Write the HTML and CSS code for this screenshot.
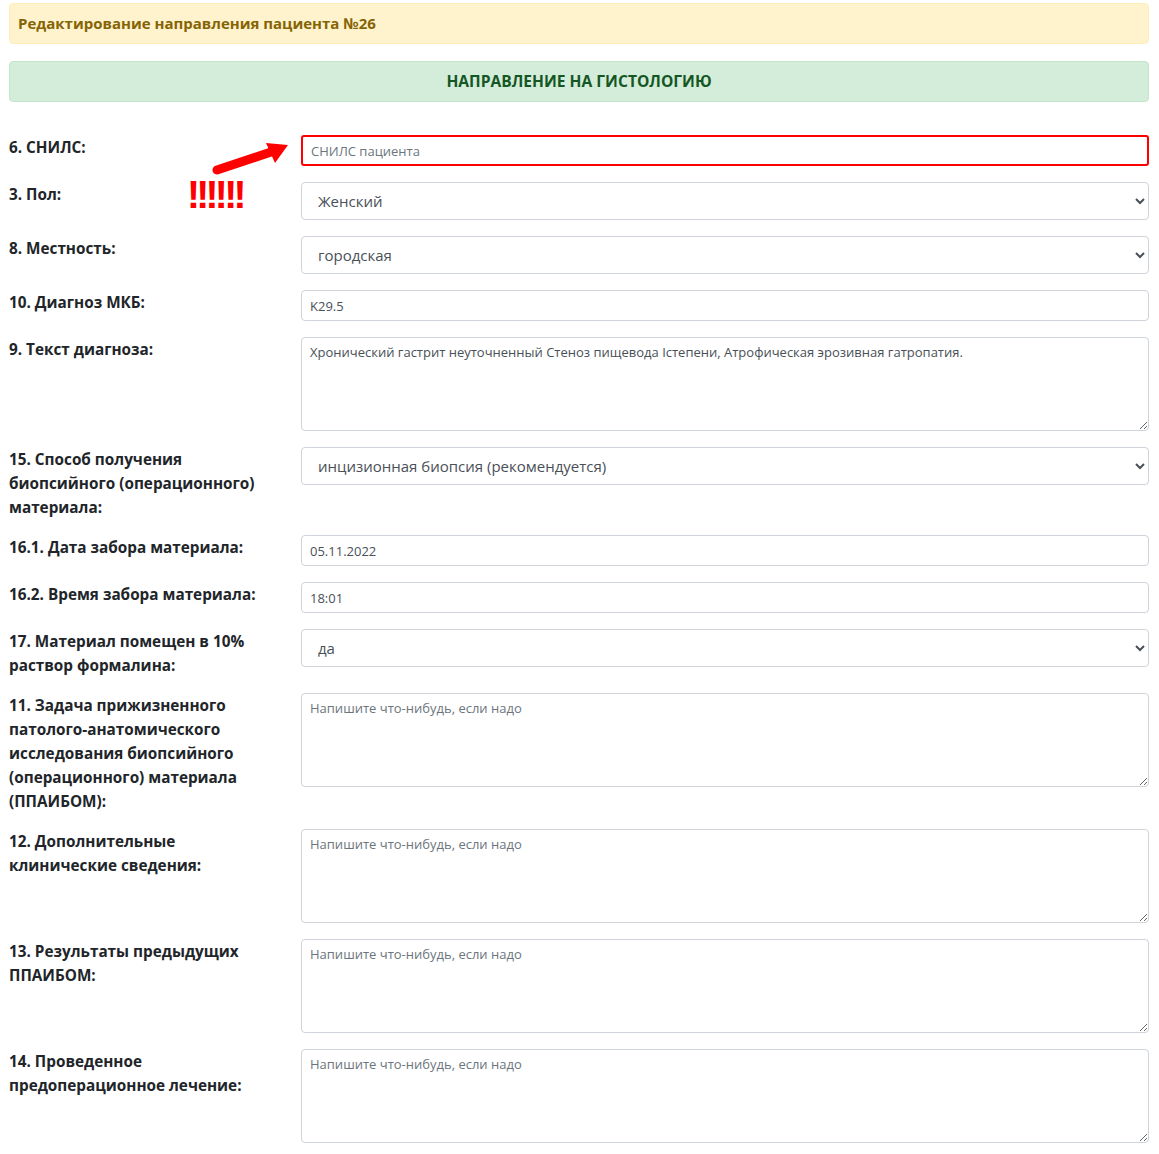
FILE: index.html
```html
<!DOCTYPE html>
<html lang="ru">
<head>
<meta charset="utf-8">
<title>Редактирование направления пациента №26</title>
<link rel="stylesheet" href="styles.css">
</head>
<body>
<div class="page">
  <div class="alert alert-warning">Редактирование направления пациента №26</div>
  <div class="alert alert-success">НАПРАВЛЕНИЕ НА ГИСТОЛОГИЮ</div>

  <form class="form">
    <div class="row">
      <label class="lbl">6. СНИЛС:</label>
      <input class="ctl ctl-sm ctl-danger" type="text" placeholder="СНИЛС пациента">
      <svg class="arrow" width="90" height="40" viewBox="0 0 90 40">
        <line x1="8" y1="30" x2="62" y2="12" stroke="#ff0000" stroke-width="9" stroke-linecap="round"/>
        <polygon points="79,5 57,3 66,23" fill="#ff0000"/>
      </svg>
      <span class="bang">!!!!!!</span>
    </div>
    <div class="row">
      <label class="lbl">3. Пол:</label>
      <select class="ctl ctl-select"><option>Женский</option><option>Мужской</option></select>
    </div>
    <div class="row">
      <label class="lbl">8. Местность:</label>
      <select class="ctl ctl-select"><option>городская</option><option>сельская</option></select>
    </div>
    <div class="row">
      <label class="lbl">10. Диагноз МКБ:</label>
      <input class="ctl ctl-sm" type="text" value="K29.5">
    </div>
    <div class="row">
      <label class="lbl">9. Текст диагноза:</label>
      <textarea class="ctl ctl-area">Хронический гастрит неуточненный Стеноз пищевода Iстепени, Атрофическая эрозивная гатропатия.</textarea>
    </div>
    <div class="row">
      <label class="lbl">15. Способ получения биопсийного (операционного) материала:</label>
      <select class="ctl ctl-select"><option>инцизионная биопсия (рекомендуется)</option></select>
    </div>
    <div class="row">
      <label class="lbl">16.1. Дата забора материала:</label>
      <input class="ctl ctl-sm" type="text" value="05.11.2022">
    </div>
    <div class="row">
      <label class="lbl">16.2. Время забора материала:</label>
      <input class="ctl ctl-sm" type="text" value="18:01">
    </div>
    <div class="row">
      <label class="lbl">17. Материал помещен в 10% раствор формалина:</label>
      <select class="ctl ctl-select"><option>да</option><option>нет</option></select>
    </div>
    <div class="row">
      <label class="lbl">11. Задача прижизненного патолого-анатомического исследования биопсийного (операционного) материала (ППАИБОМ):</label>
      <textarea class="ctl ctl-area" placeholder="Напишите что-нибудь, если надо"></textarea>
    </div>
    <div class="row">
      <label class="lbl">12. Дополнительные клинические сведения:</label>
      <textarea class="ctl ctl-area" placeholder="Напишите что-нибудь, если надо"></textarea>
    </div>
    <div class="row">
      <label class="lbl">13. Результаты предыдущих ППАИБОМ:</label>
      <textarea class="ctl ctl-area" placeholder="Напишите что-нибудь, если надо"></textarea>
    </div>
    <div class="row">
      <label class="lbl">14. Проведенное предоперационное лечение:</label>
      <textarea class="ctl ctl-area" placeholder="Напишите что-нибудь, если надо"></textarea>
    </div>
  </form>
</div>
</body>
</html>
```

FILE: styles.css
```css
* { box-sizing: border-box; }

html, body {
  margin: 0;
  padding: 0;
  background: #ffffff;
}

body {
  font-family: "Open Sans", "Noto Sans", "DejaVu Sans", sans-serif;
  color: #212529;
  font-size: 15px;
}

.page {
  padding: 3px 10px 0 9px;
}

.alert {
  border: 1px solid transparent;
  border-radius: 4px;
  padding: 9px 8px;
  line-height: 21px;
  font-size: 15px;
  font-weight: 700;
}

.alert-warning {
  background: #fff3cd;
  border-color: #ffeeba;
  color: #856404;
  margin-bottom: 17px;
}

.alert-success {
  background: #d4edda;
  border-color: #c3e6cb;
  color: #155724;
  text-align: center;
  font-size: 15.6px;
  margin-bottom: 33px;
}

.form {
  display: flex;
  flex-direction: column;
  gap: 16px;
}

.row {
  position: relative;
  display: grid;
  grid-template-columns: 276px 1fr;
  column-gap: 16px;
  align-items: start;
}

.lbl {
  font-weight: 700;
  font-size: 15.3px;
  line-height: 24px;
  color: #212529;
}

.ctl {
  display: block;
  width: 100%;
  font-family: "Open Sans", "Noto Sans", "DejaVu Sans", sans-serif;
  color: #495057;
  background: #ffffff;
  border: 1px solid #ced4da;
  border-radius: 4px;
  margin: 0;
}

.ctl::placeholder {
  color: #6c757d;
  opacity: 1;
}

.ctl-sm {
  height: 31px;
  padding: 4px 8px;
  font-size: 13px;
  line-height: 21px;
}

.ctl-danger {
  border: 2px solid #ff0000;
  padding: 3px 8px;
  border-radius: 3px;
}

.ctl-select {
  height: 38px;
  padding: 6px 8px 6px 12px;
  font-size: 15px;
  line-height: 24px;
}

.ctl-area {
  height: 94px;
  padding: 4px 8px;
  font-size: 13px;
  line-height: 21px;
  resize: vertical;
}

.arrow {
  position: absolute;
  left: 200px;
  top: 5px;
}

.bang {
  position: absolute;
  left: 178px;
  top: 40px;
  font-family: "Liberation Sans", Arial, sans-serif;
  font-weight: 700;
  font-size: 39px;
  line-height: 40px;
  letter-spacing: -3.7px;
  color: #ff0000;
}
```
